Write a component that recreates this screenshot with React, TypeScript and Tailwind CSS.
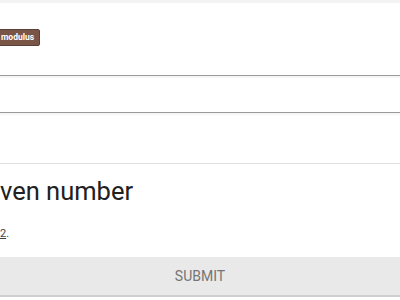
import React from 'react';

export default function App() {
  return (
    <div className="w-[400px] h-[300px] overflow-hidden bg-white" style={{ fontFamily: 'Roboto, "Noto Sans", sans-serif' }}>
      {/* top strip */}
      <div className="h-[3px] bg-[#f3f3f3]" />

      {/* tag row */}
      <div className="h-[73px] border-b border-[#9a9a9a] pt-[26px]">
        <div className="-ml-[6px] w-fit rounded-[2px] border border-[#5d4037] bg-[#795548] pl-[6px] pr-[5px] text-[8.5px] font-bold leading-[15px] text-white">
          modulus
        </div>
      </div>
      <div className="h-[2px] bg-[#f6f6f6]" />

      {/* input row */}
      <div className="h-[35px] border-b border-[#9a9a9a]" />
      <div className="h-[2px] bg-[#f6f6f6]" />

      {/* empty row */}
      <div className="h-[49px] border-b border-[#e0e0e0]" />

      {/* title */}
      <div className="pt-[11px]">
        <h1 className="text-[25.5px] leading-[32px] font-normal text-[#212121]">ven number</h1>
        <p className="mt-[20px] text-[11px] leading-[14px] text-[#424242]">
          <span className="underline">2</span>.
        </p>
      </div>

      {/* submit */}
      <div className="mt-[16px] flex h-[40px] items-center justify-center border-b-2 border-[#cfcfcf] bg-[#e9e9e9]">
        <span className="text-[14px] text-[#757575]">SUBMIT</span>
      </div>
    </div>
  );
}
